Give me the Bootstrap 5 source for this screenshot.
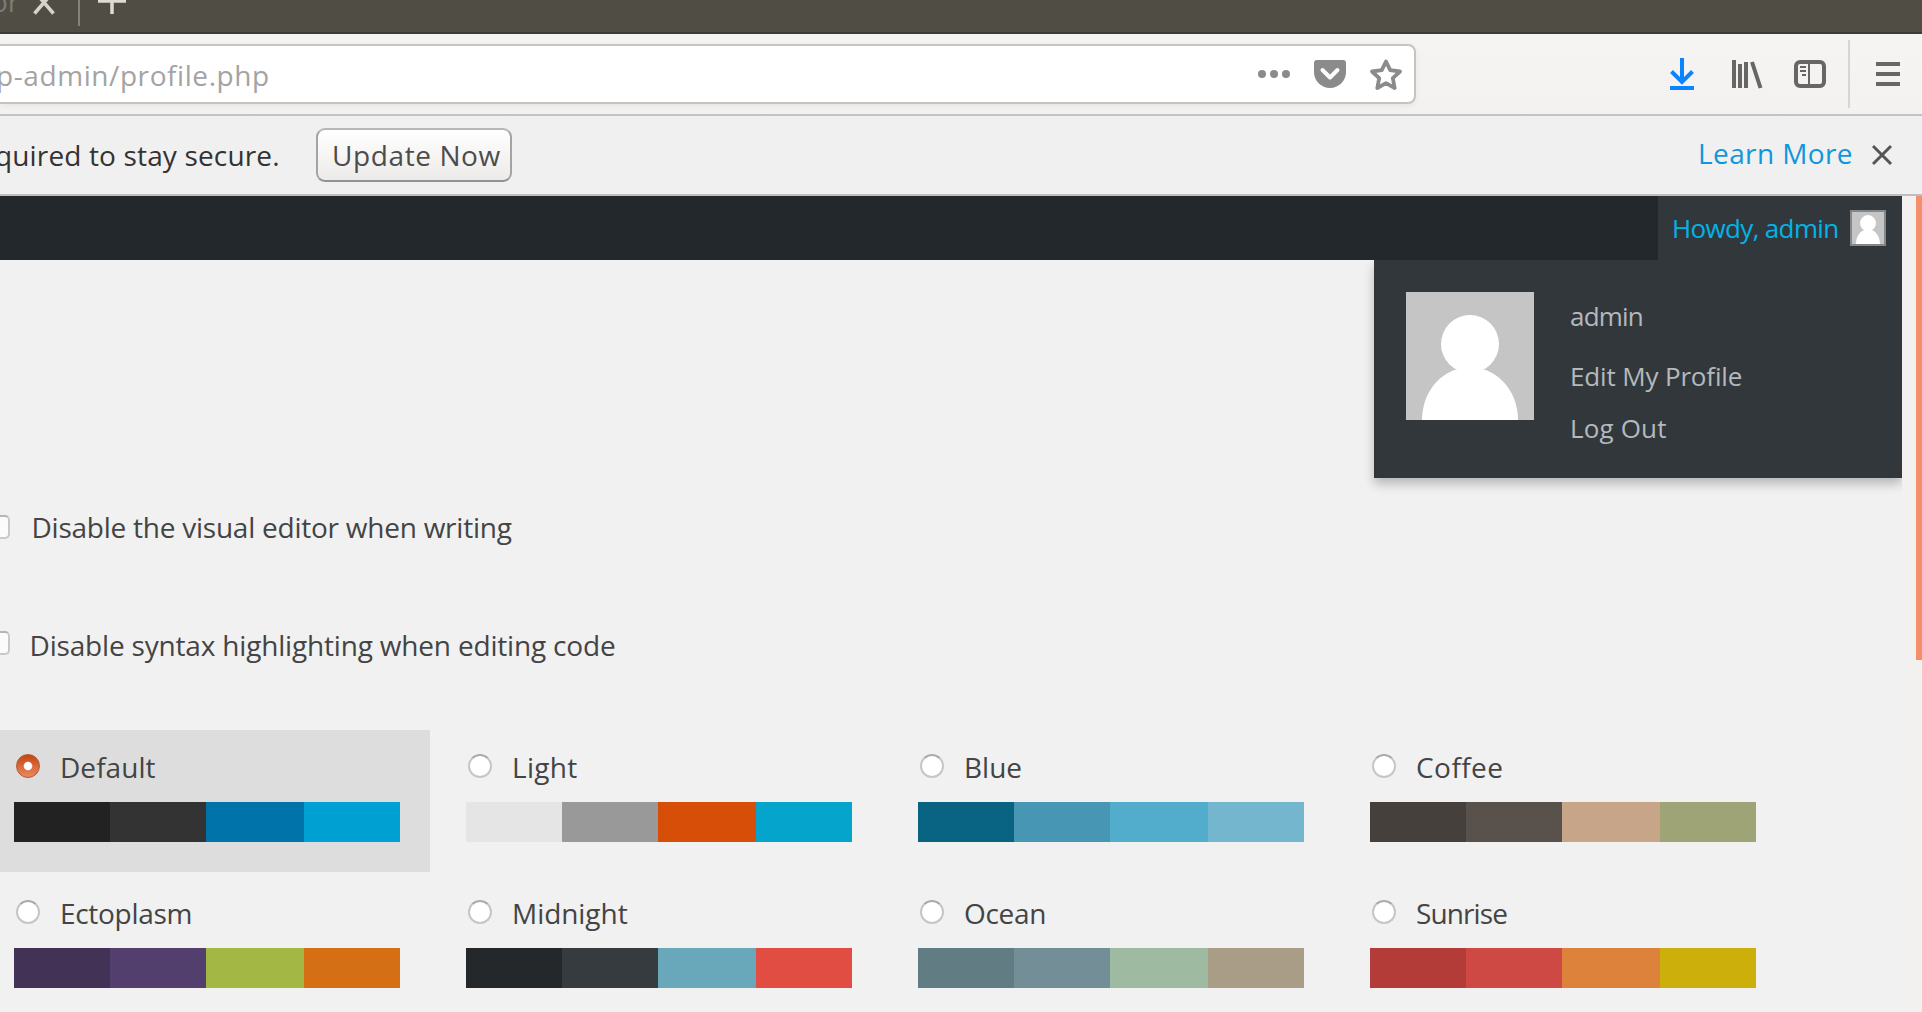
<!DOCTYPE html>
<html lang="en">
<head>
<meta charset="utf-8">
<title>Profile</title>
<link href="https://cdn.jsdelivr.net/npm/bootstrap@5.3.0/dist/css/bootstrap.min.css" rel="stylesheet">
<style>
body{width:1922px;height:1012px;overflow:hidden;background:#f1f1f1;color:#444;font:28px/36px "Open Sans","Noto Sans",sans-serif;white-space:nowrap}
svg{display:block;flex:none}
.tabstrip{height:34px;background:#504d45;border-bottom:2px solid #3c3b37}
.toolbar-row{height:80px;background:linear-gradient(#f5f4f3,#f3f2f1)}
.urlbar{width:1416px;height:60px;margin-top:10px;padding:0 11px 0 0;background:#fff;border:2px solid #c6c4c2;border-left:0;border-radius:0 8px 8px 0;box-shadow:0 2px 6px rgba(0,0,0,.06);color:#a3a3a3}
.url-text{letter-spacing:.58px;margin-left:-4px;padding-top:1px}
.divider{width:2px;height:68px;margin-top:6px;background:#d7d5d3}
.notice{height:82px;background:#f0f0f0;border-top:2px solid #c5c3c1;border-bottom:2px solid #bcbebf;color:#333}
.notice-text{letter-spacing:.15px;width:316px;text-indent:-5px}
.update-btn{width:196px;height:54px;border:2px solid #a6a4a2;border-top-color:#b8b6b4;border-bottom-color:#939190;border-radius:9px;background:linear-gradient(#fff,#edebe9);color:#4c4c4c;letter-spacing:.6px;padding:0 0 0 14px;font-size:28px;line-height:48px;text-align:left}
.learn{color:#0f96dc;letter-spacing:.4px;text-decoration:none;margin-right:19px;padding-bottom:4px}
.page-area{height:816px}
.scroller{width:20px;flex:none;background:#f2f1f0}
.thumb{width:6px;height:464px;background:#f48f69}
.adminbar{height:64px;background:#23282d}
.howdy{width:244px;height:64px;background:#32373c;color:#00b4e8;font-size:26px;padding:0 16px 0 14px}
.howdy span{letter-spacing:-.65px}
.account-menu{top:64px;right:0;width:528px;height:218px;padding:32px;background:#32373c;box-shadow:0 6px 10px rgba(0,0,0,.24);color:#b4b9be;font-size:26px;line-height:52px;clip-path:inset(0 0 -24px -24px)}
.menu-links{margin:-2px 0 0 36px}
.menu-links a{color:inherit;text-decoration:none}
.setting{height:36px}
.tick{width:10px;height:24px;border:2px solid #c9c9c9;border-top-color:#b5b5b5;border-left:0;border-radius:0 5px 5px 0;background:#fbfbfb}
.first-setting{margin-top:249px}
.second-setting{margin-top:82px;margin-bottom:67px}
.second-setting .tick{margin-bottom:4px}
.schemes{gap:4px 22px}
.scheme{width:430px;height:142px;padding:19px 0 0 14px}
.scheme.chosen{background:#ddd}
.scheme label{height:36px;margin-bottom:17px}
.dot{width:24px;height:24px;margin:0 20px 2px 2px;border:2px solid #c6c6c6;border-top-color:#aaa;border-radius:50%;background:#fff;appearance:none}
.dot:checked{border:1px solid #b75630;background:radial-gradient(circle,#fff 0 3.6px,transparent 4.8px),linear-gradient(#c44612,#ea8a60)}
.swatches{width:386px;height:40px;display:grid;grid-template-columns:96px 96px 98px 96px}
</style>
<script src="https://cdn.jsdelivr.net/npm/bootstrap@5.3.0/dist/js/bootstrap.bundle.min.js"></script>
</head>
<body>
<div class="tabstrip">
<svg width="140" height="32" viewBox="0 0 140 32"><text x="-9" y="12" font-size="28" fill="#7d7b74">or</text><path d="M34.500 13.500L44 2.500 53.500 13.500M34 -9L44 2.500 54 -9" fill="none" stroke="#d6d3cc" stroke-width="3.500"/><path d="M79 0V26" stroke="#85827b" stroke-width="2"/><path d="M98 1H126M112 -13V14" stroke="#dedbd3" stroke-width="3.500"/></svg>
</div>
<div class="toolbar-row d-flex">
<div class="urlbar d-flex align-items-center">
<span class="url-text flex-grow-1">p-admin/profile.php</span>
<svg width="146" height="34" viewBox="1257 57 146 34"><g fill="#8b8b8b"><circle cx="1262" cy="74" r="4"/><circle cx="1274" cy="74" r="4"/><circle cx="1286" cy="74" r="4"/><path d="M1317 60h26a3 3 0 0 1 3 3v9a16 16 0 0 1-32 0v-9a3 3 0 0 1 3-3z"/></g><path d="M1322.500 70l7.500 7.500 7.500-7.500" fill="none" stroke="#fff" stroke-width="4" stroke-linecap="round" stroke-linejoin="round"/><path d="M1386 61.500l4.200 8.700 9.800 1.300-7.200 6.600 1.900 9.900-8.700-4.800-8.700 4.800 1.900-9.900-7.200-6.600 9.800-1.300z" fill="none" stroke="#8b8b8b" stroke-width="3.800" stroke-linejoin="round"/></svg>
</div>
<svg class="ms-auto" width="180" height="80" viewBox="1668 34 180 80"><g fill="none" stroke="#0a84ff" stroke-width="4"><path d="M1682 58V82M1671.500 71.500L1682 82 1692.500 71.500M1670 88H1694"/></g><g fill="none" stroke="#666" stroke-width="4"><path d="M1734 60V88M1740 64V88M1746 62V88M1752 62L1760.500 88"/><rect x="1796" y="62" width="28" height="24" rx="4"/><path d="M1809 62V86M1800 67H1806M1800 71H1806M1802 75H1806" stroke-width="2"/></g></svg>
<div class="divider"></div>
<svg width="72" height="80" viewBox="1850 34 72 80"><path d="M1876 64h24M1876 74h24M1876 84h24" stroke="#666" stroke-width="4"/></svg>
</div>
<div class="notice d-flex align-items-center">
<div class="notice-text">quired to stay secure.</div>
<button class="update-btn">Update Now</button>
<a class="learn ms-auto" href="#">Learn More</a>
<svg width="50" height="24" viewBox="1872 143 50 24"><path d="M1873 146L1891 164M1891 146L1873 164" stroke="#555" stroke-width="3"/></svg>
</div>
<div class="page-area d-flex">
<main class="flex-grow-1 position-relative">
<div class="adminbar d-flex justify-content-end">
<div class="howdy d-flex align-items-center justify-content-between"><span>Howdy, admin</span>
<svg width="36" height="36" viewBox="0 0 36 36"><path fill="#82878c" d="M0 0h36v36H0z"/><path fill="#c5c5c5" d="M2 2h32v32H2z"/><path fill="#fff" d="M6 34c0-7 3.500-12 8-14a8 8 0 1 1 8 0c4.500 2 8 7 8 14z"/></svg></div>
</div>
<div class="account-menu position-absolute d-flex">
<svg width="128" height="128" viewBox="0 0 128 128"><path fill="#c5c5c5" d="M0 0h128v128H0z"/><circle cx="64" cy="52" r="29" fill="#fff"/><path fill="#fff" d="M16 128C16 106 28 86 48 78Q64 74 80 78C100 86 112 106 112 128z"/></svg>
<div class="menu-links d-flex flex-column"><a class="mb-2" href="#" style="letter-spacing:-.8px">admin</a><a href="#" style="letter-spacing:-.15px">Edit My Profile</a><a href="#" style="letter-spacing:.15px">Log Out</a></div>
</div>
<div class="setting first-setting d-flex align-items-center"><span class="tick"></span><span style="letter-spacing:-.24px;margin-left:21.500px">Disable the visual editor when writing</span></div>
<div class="setting second-setting d-flex align-items-center"><span class="tick"></span><span style="letter-spacing:-.18px;margin-left:19.500px">Disable syntax highlighting when editing code</span></div>
<div class="schemes d-flex flex-wrap" id="schemes"></div>
</main>
<div class="scroller d-flex justify-content-end"><div class="thumb"></div></div>
</div>
<script>
const schemes=[
["Default",.05,"#222","#333","#0073aa","#00a0d2"],
["Light",.3,"#e5e5e5","#999","#d64e07","#04a4cc"],
["Blue",0,"#096484","#4796b3","#52accc","#74b6ce"],
["Coffee",.45,"#46403c","#59524c","#c7a589","#9ea476"],
["Ectoplasm",-.3,"#413256","#523f6d","#a3b745","#d46f15"],
["Midnight",-.05,"#25282b","#363b3f","#69a8bb","#e14d43"],
["Ocean",-.3,"#627c83","#738e96","#9ebaa0","#aa9d88"],
["Sunrise",-.9,"#b43c38","#cf4944","#dd823b","#ccaf0b"]];
document.getElementById("schemes").innerHTML=schemes.map(([n,s,...c],i)=>
`<div class="scheme${i?"":" chosen"}"><label class="d-flex align-items-center"><input class="dot" type="radio" name="scheme"${i?"":" checked"}><span style="letter-spacing:${s}px">${n}</span></label><div class="swatches">${c.map(x=>`<i style="background:${x}"></i>`).join("")}</div></div>`).join("");
</script>
</body>
</html>
